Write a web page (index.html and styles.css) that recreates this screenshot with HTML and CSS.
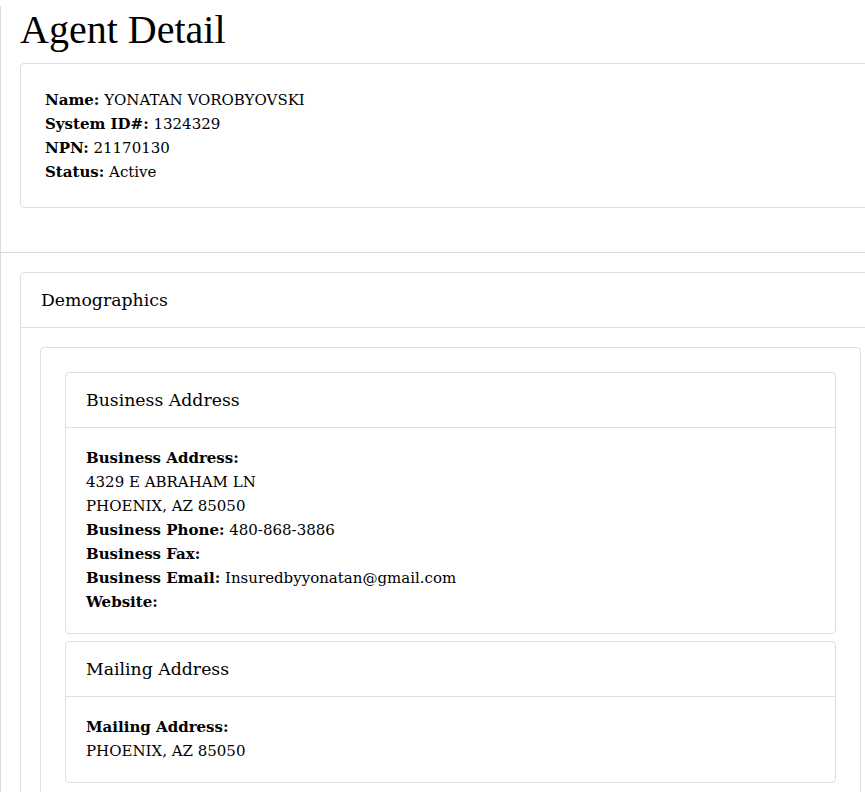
FILE: index.html
```html
<!DOCTYPE html>
<html lang="en">
<head>
<meta charset="utf-8">
<title>Agent Detail</title>
<link rel="stylesheet" href="styles.css">
</head>
<body>
<div class="page">
  <div class="top">
    <h1 class="title">Agent Detail</h1>
    <div class="card summary">
      <div><b>Name:</b> YONATAN VOROBYOVSKI</div>
      <div><b>System ID#:</b> 1324329</div>
      <div><b>NPN:</b> 21170130</div>
      <div><b>Status:</b> Active</div>
    </div>
  </div>
  <div class="divider"></div>
  <div class="card demo">
    <div class="card-header">Demographics</div>
    <div class="demo-body">
      <div class="card well">
        <div class="card addr">
          <div class="card-header">Business Address</div>
          <div class="addr-body">
            <div><b>Business Address:</b></div>
            <div>4329 E ABRAHAM LN</div>
            <div>PHOENIX, AZ 85050</div>
            <div><b>Business Phone:</b> 480-868-3886</div>
            <div><b>Business Fax:</b></div>
            <div><b>Business Email:</b> Insuredbyyonatan@gmail.com</div>
            <div><b>Website:</b></div>
          </div>
        </div>
        <div class="card addr mail">
          <div class="card-header">Mailing Address</div>
          <div class="addr-body">
            <div><b>Mailing Address:</b></div>
            <div>PHOENIX, AZ 85050</div>
          </div>
        </div>
      </div>
    </div>
  </div>
</div>
</body>
</html>
```
FILE: styles.css
```css
html {
  overflow: hidden;
}
body {
  margin: 0;
  font-family: "DejaVu Serif", "Liberation Serif", serif;
  font-size: 15px;
  line-height: 24px;
  color: #000;
  background: #fff;
}
b {
  font-weight: 700;
}
.page {
  border-left: 1px solid #dcdcdc;
  min-height: 792px;
  width: 920px;
}
.top {
  padding-left: 19px;
}
.title {
  margin: 6px 0 0 0;
  font-family: "Liberation Serif", "DejaVu Serif", serif;
  font-size: 40px;
  line-height: 48px;
  font-weight: 400;
}
.card {
  border: 1px solid #dfdfdf;
  border-radius: 4px;
  background: #fff;
}
.summary {
  margin-top: 9px;
  width: 860px;
  box-sizing: border-box;
  padding: 24px 24px 23px;
}
.divider {
  margin-top: 44px;
  border-top: 1px solid #dcdcdc;
}
.demo {
  margin: 19px 0 0 19px;
  width: 860px;
  box-sizing: border-box;
}
.card-header {
  padding: 12px 20px;
  font-size: 17.3px;
  line-height: 30px;
  border-bottom: 1px solid #dfdfdf;
}
.demo-body {
  padding: 19px 19px 20px 19px;
}
.well {
  width: 821px;
  box-sizing: border-box;
  padding: 24px 24px 24px;
}
.addr-body {
  padding: 18px 20px 19px;
}
.mail {
  margin-top: 7px;
}
```
